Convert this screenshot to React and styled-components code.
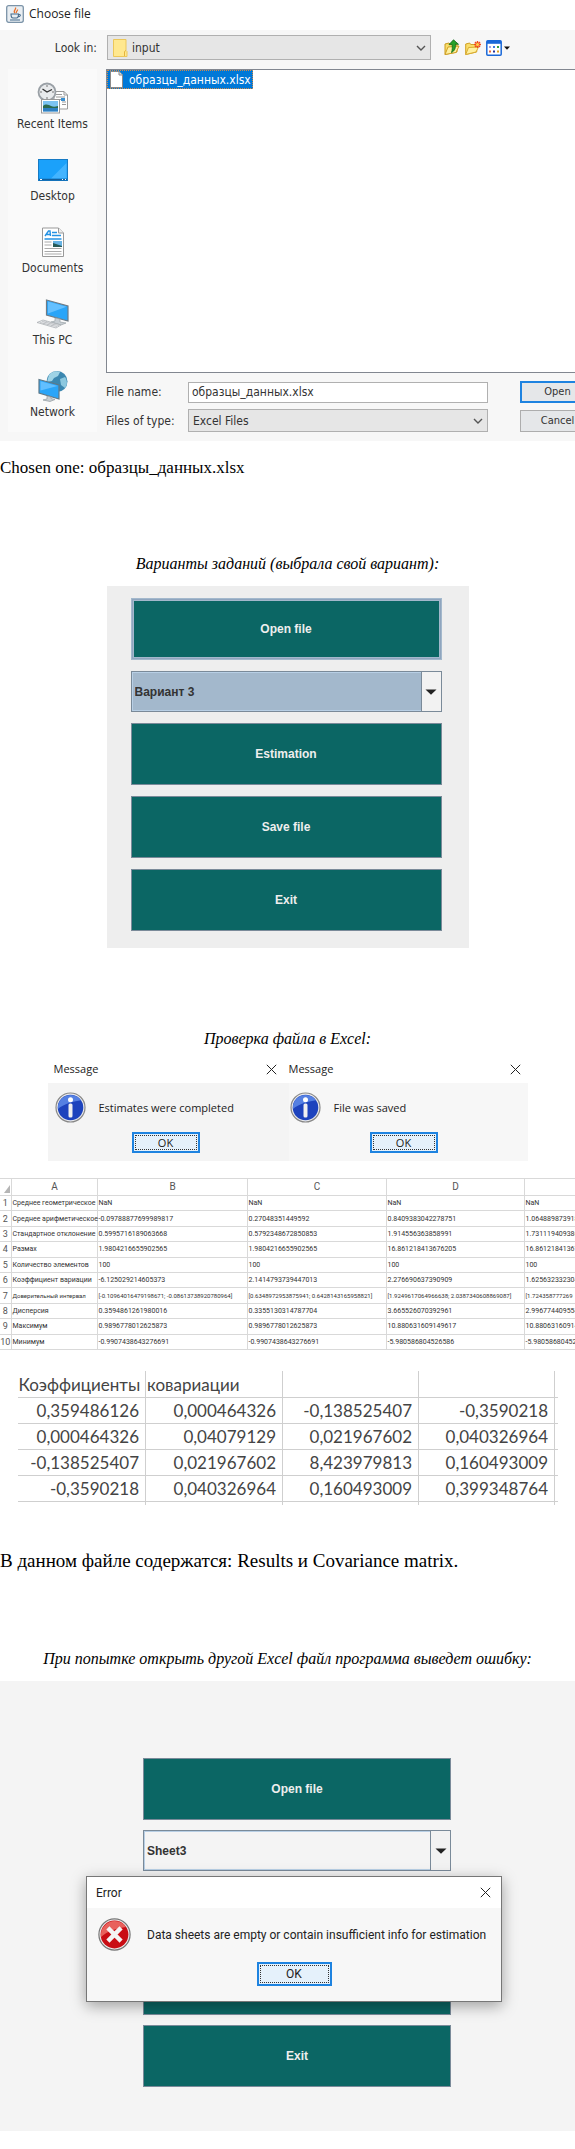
import React from "react";
import styled, { createGlobalStyle } from "styled-components";

const GlobalStyle = createGlobalStyle`
  * { box-sizing: border-box; }
  body { margin: 0; background: #fff; color: #000; overflow-x: hidden; }
  button, input, select { font: inherit; color: inherit; margin: 0; border-radius: 0; }
`;

const tahoma = `"DejaVu Sans Condensed", "Noto Sans", sans-serif`;
const segoe = `"Open Sans", "Noto Sans", sans-serif`;
const arial = `"Liberation Sans", Arial, sans-serif`;

const Page = styled.main`
  font-family: "Liberation Serif", "Times New Roman", serif;
  padding-bottom: 12px;
  overflow: hidden;
`;
const Paragraph = styled.p`
  margin: ${(p) => p.$space};
  font-size: ${(p) => (p.$large ? "19px" : "17px")};
  line-height: 24px;
`;
const Caption = styled.h2`
  margin: ${(p) => p.$space};
  font-size: 16px;
  font-weight: 400;
  font-style: italic;
  line-height: 24px;
  text-align: center;
`;

/* File chooser */
const Chooser = styled.section`
  background: #f7f7f7;
  font-family: ${tahoma};
  font-size: 12px;
  line-height: 16px;
  color: #333;
  overflow: hidden;
`;
const ChooserTitle = styled.header`
  display: flex;
  align-items: center;
  gap: 5px;
  height: 30px;
  padding: 0 0 2px 6px;
  background: #fff;
  color: #222;
  font-family: ${segoe};
`;
const LookRow = styled.div`
  display: flex;
  align-items: center;
  height: 39px;
  padding-bottom: 4px;
`;
const LookLabel = styled.label`
  width: 107px;
  padding-right: 10px;
  text-align: right;
`;
const Combo = styled.div`
  display: grid;
  grid-template-columns: ${(p) => (p.$icon ? "24px" : "4px")} 1fr 18px;
  align-items: center;
  width: ${(p) => p.$width};
  height: ${(p) => p.$height};
  border: 1px solid #b0b0b0;
  background: #e6e6e6;
  & > * { grid-row: 1; }
  & > svg { grid-column: 1; pointer-events: none; justify-self: center; }
  & > svg:last-child { grid-column: 3; }
`;
const ComboSelect = styled.select`
  appearance: none;
  grid-column: 1 / -1;
  width: 100%;
  height: 100%;
  padding: 0 18px 0 ${(p) => (p.$icon ? "24px" : "4px")};
  border: 0;
  background: transparent;
`;
const Tools = styled.div`
  display: flex;
  align-items: center;
  gap: 5px;
  margin-left: 13px;
`;
const ToolButton = styled.button`
  display: flex;
  align-items: center;
  gap: 2px;
  padding: 0;
  border: 0;
  background: none;
`;
const ChooserBody = styled.div`
  display: grid;
  grid-template-columns: 89px 1fr;
  gap: 9px;
  padding: 0 0 9px 8px;
`;
const Places = styled.nav`
  display: flex;
  flex-direction: column;
  background: #fafafa;
  padding-top: 13px;
  gap: 12px;
`;
const Place = styled.a`
  display: flex;
  flex-direction: column;
  align-items: center;
  gap: 2px;
  height: 60px;
  color: #333;
  text-decoration: none;
  svg { flex: none; }
`;
const FileArea = styled.div`
  min-width: 0;
`;
const FileList = styled.div`
  height: 304px;
  border: 1px solid #828790;
  border-right: 0;
  background: #fff;
`;
const FileItem = styled.button`
  display: flex;
  align-items: center;
  gap: 6px;
  height: 19px;
  padding: 0 1px 0 2px;
  border: 1px dotted #d08a4a;
  background: #0078d7;
  color: #fff;
`;
const FileForm = styled.form`
  display: grid;
  grid-template-columns: 82px 300px 75px;
  row-gap: 6px;
  padding-top: 8px;
  align-items: center;
  button { margin-left: 32px; }
`;
const FileInput = styled.input`
  width: 100%;
  height: 21px;
  padding: 0 3px;
  border: 1px solid #b0b0b0;
  background: #fff;
`;
const ChooserButton = styled.button`
  width: 75px;
  height: 22px;
  padding: 0;
  border: ${(p) => (p.$primary ? "2px solid #1e83e0" : "1px solid #adadad")};
  background: #e5e7e9;
  font-size: 11px;
`;

/* Task panels */
const TaskPanel = styled.section`
  display: flex;
  justify-content: center;
  margin: 10px auto 0;
  background: ${(p) => (p.$wide ? "#f4f4f4" : "#eeeeee")};
  width: ${(p) => (p.$wide ? "auto" : "362px")};
  padding: ${(p) => (p.$wide ? "77px 0 44px 19px" : "12px 3px 17px 0")};
`;
const Stack = styled.div`
  position: relative;
  display: flex;
  flex-direction: column;
  gap: ${(p) => (p.$wide ? "10px" : "11px")};
  width: ${(p) => (p.$wide ? "308px" : "311px")};
  font: bold 12px/16px ${arial};
  color: #333;
`;
const TaskButton = styled.button`
  height: 62px;
  padding: 0;
  border: ${(p) => (p.$focused ? "3px double #a3b8cc" : "1px solid #7a8a99")};
  outline: ${(p) => (p.$focused ? "1px solid #8fa5be" : "0")};
  outline-offset: -2px;
  background: #0b6664;
  color: #eee;
`;
const TaskCombo = styled.div`
  display: grid;
  grid-template-columns: 1fr 20px;
  align-items: stretch;
  height: 41px;
  border: 1px solid #7a8a99;
`;
const TaskSelect = styled.select`
  appearance: none;
  grid-area: 1 / 1 / 2 / 3;
  padding: 0 22px 0 2px;
  border: 1px solid #b8cfe5;
  background: ${(p) => (p.$selected ? "#a3b8cc" : "#f4f4f4")};
`;
const TaskArrow = styled.span`
  grid-area: 1 / 2 / 2 / 3;
  display: flex;
  align-items: center;
  justify-content: center;
  border-left: 1px solid #7a8a99;
  background: #f2f2f2;
  pointer-events: none;
`;

/* Message boxes */
const Messages = styled.div`
  display: flex;
  width: 480px;
  margin: 6px auto 0;
`;
const MessageBox = styled.section`
  flex: ${(p) => p.$basis};
  font-family: ${segoe};
  font-size: 11px;
  line-height: 16px;
  color: #222;
`;
const ErrorBox = styled(MessageBox)`
  position: absolute;
  left: -57px;
  top: 118px;
  width: 416px;
  font-family: Roboto, sans-serif;
  font-size: 12px;
  font-weight: 400;
  border: 1px solid #777;
  box-shadow: 0 4px 14px rgba(0, 0, 0, 0.35);
`;
const MessageTitle = styled.header`
  display: flex;
  align-items: center;
  justify-content: space-between;
  height: ${(p) => (p.$tall ? "31px" : "26px")};
  padding: ${(p) => (p.$tall ? "0 10px 0 9px" : p.$first ? "0 12px 2px 6px" : "0 7px 2px 0")};
  background: #fff;
`;
const CloseButton = styled.button`
  display: flex;
  padding: 0;
  border: 0;
  background: none;
`;
const MessageBody = styled.div`
  display: flex;
  flex-direction: column;
  align-items: ${(p) => (p.$tall ? "center" : "flex-start")};
  gap: ${(p) => (p.$tall ? "11px" : "9px")};
  height: ${(p) => (p.$tall ? "93px" : "78px")};
  padding-top: ${(p) => (p.$tall ? "10px" : "9px")};
  background: ${(p) => (p.$shade ? "#f4f4f4" : "#f7f7f7")};
`;
const MessageText = styled.div`
  display: flex;
  align-items: center;
  align-self: stretch;
  gap: ${(p) => (p.$tall ? "16px" : "13px")};
  padding-left: ${(p) => (p.$tall ? "11px" : p.$first ? "7px" : "1px")};
  white-space: nowrap;
  svg { flex: none; }
`;
const OkButton = styled.button`
  width: ${(p) => (p.$tall ? "75px" : "68px")};
  height: ${(p) => (p.$tall ? "24px" : "21px")};
  margin-left: ${(p) => (p.$tall ? "0" : p.$first ? "84px" : "81px")};
  padding: 0;
  border: 2px solid #1e83e0;
  outline: 1px dotted #333;
  outline-offset: -4px;
  background: #e5f1fb;
  line-height: 14px;
`;

/* Spreadsheets */
const SheetClip = styled.div`
  margin-top: 17px;
  overflow: hidden;
`;
const Sheet = styled.table`
  table-layout: fixed;
  border-collapse: collapse;
  width: 664px;
  height: 172px;
  font-family: Roboto, sans-serif;
  font-size: 7px;
  line-height: 12px;
  color: #333;
  td, th {
    padding: 0 0 0 1px;
    border: 1px solid #d9d9d9;
    font-weight: 400;
    white-space: nowrap;
    text-align: left;
  }
  tr > :first-child { border-left: 0; padding: 0; text-align: center; }
  thead th { height: 17px; text-align: center; font-size: 10px; color: #555; }
  tbody th { font-size: 9px; color: #555; }
  thead svg { display: block; margin: 4px 0 0 4px; }
`;
const ResultRow = styled.tr`
  td { font-size: ${(p) => (p.$dense ? "6px" : "7px")}; }
`;
const Matrix = styled.table`
  table-layout: fixed;
  border-collapse: collapse;
  width: 540px;
  margin: 21px auto 0;
  font-family: Lato, "Open Sans", sans-serif;
  font-size: 17px;
  line-height: 22px;
  color: #444;
  th, td {
    height: 26px;
    padding: 2px 6px 0 1px;
    border: 1px solid #cfcfcf;
    border-left: 0;
    font-weight: 400;
    text-align: right;
    white-space: nowrap;
  }
  th { text-align: left; border-top: 0; padding-right: 0; }
  tr > :last-child { border-right: 0; padding: 0; }
  tfoot td { height: 4px; padding: 0; border-bottom: 0; }
`;

const CloseIcon = () => (
  <svg width="11" height="11" viewBox="0 0 11 11" aria-hidden="true">
    <path d="M.8.8l9.4 9.4M10.2.8L.8 10.2" stroke="#222" strokeWidth="1" fill="none" />
  </svg>
);
const Chevron = () => (
  <svg width="10" height="6" viewBox="0 0 10 6" aria-hidden="true">
    <path d="M1 1l4 4 4-4" stroke="#555" strokeWidth="1.4" fill="none" />
  </svg>
);
const Caret = () => (
  <svg width="12" height="6" viewBox="0 0 12 6" aria-hidden="true">
    <path d="M.5.5h11L6 5.8z" fill="#222" />
  </svg>
);
const JavaIcon = () => (
  <svg width="18" height="18" viewBox="0 0 18 18" aria-hidden="true">
    <rect x=".7" y=".7" width="16.6" height="16.6" rx="2" fill="#e9eef2" stroke="#7b93a8" strokeWidth="1.3" />
    <path d="M9 8C6.5 6 10.500 5 9.500 2.500M10.500 8c-1-1.500 1.500-2 1-3.500" stroke="#e8702a" strokeWidth="1.3" fill="none" />
    <path d="M5 9h7.500c0 2-.5 4-2 4H7c-1.500 0-2-2-2-4zM12.500 9.500c3-.5 2 2.500-.8 2.500M4 15h10" stroke="#456b8c" strokeWidth="1.100" fill="none" />
  </svg>
);
const FolderIcon = () => (
  <svg width="15" height="18" viewBox="0 0 15 18" aria-hidden="true">
    <path d="M.5.500h12.500v11l1 1v5H.5z" fill="#ffe88f" stroke="#ecc75a" />
    <path d="M11.500 17v-4.500L13 11.500" stroke="#e5b53c" fill="none" />
  </svg>
);
const UpFolderIcon = () => (
  <svg width="16" height="17" viewBox="0 0 16 17" aria-hidden="true">
    <path d="M1 15.500V5l4-1 1 1h7v8z" fill="#f9dd6b" stroke="#c99a1e" />
    <path d="M1 15.500L4 8l11-1-3 6.500z" fill="#fff0a0" stroke="#d0a024" />
    <path d="M9.500.800l5 4.500-3-.2c0 4-.5 6.500-4 8.500 1-3 .8-5 .7-8H5z" fill="#27a12a" stroke="#10691a" strokeWidth=".8" />
  </svg>
);
const NewFolderIcon = () => (
  <svg width="16" height="16" viewBox="0 0 16 16" aria-hidden="true">
    <path d="M.7 14.500V4l4-1 1 1.500h6V12z" fill="#f9dd6b" stroke="#d0a024" />
    <path d="M.7 14.500L3.500 7.500l10-.5-2.500 5z" fill="#fff0a0" stroke="#d9ac30" />
    <path d="M12.500 1v7M9 4.500h7M10 2l5 5M15 2l-5 5" stroke="#f04a1c" strokeWidth="1.400" />
    <circle cx="12.500" cy="4.500" r="1.500" fill="#ffd24a" />
  </svg>
);
const ViewIcon = () => (
  <svg width="16" height="16" viewBox="0 0 16 16" aria-hidden="true">
    <rect x=".8" y=".8" width="14.400" height="14.400" rx="1" fill="#fff" stroke="#1a68d8" strokeWidth="1.500" />
    <path d="M1 2.300h14" stroke="#1a68d8" strokeWidth="3" />
    <path d="M3 6h2v2H3z" fill="#a9a0dc" /><path d="M7 6h2v2H7z" fill="#3c78e0" /><path d="M11 6h2v2h-2z" fill="#35a040" />
    <path d="M3 10.500h2v2H3z" fill="#f06a3a" /><path d="M7 10.500h2v2H7z" fill="#26329c" /><path d="M11 10.500h2v2h-2z" fill="#e0a020" />
  </svg>
);
const SmallCaret = () => (
  <svg width="6" height="4" viewBox="0 0 6 4" aria-hidden="true"><path d="M0 .5h6L3 3.800z" fill="#111" /></svg>
);
const SheetIcon = () => (
  <svg width="13" height="17" viewBox="0 0 13 17" aria-hidden="true">
    <path d="M.5.500h8.500l3.500 3.500v12.500H.5z" fill="#fff" stroke="#8a8a8a" />
    <path d="M9 .500v3.500h3.500" fill="#ddd" stroke="#8a8a8a" />
  </svg>
);
const RecentIcon = () => (
  <svg width="32" height="32" viewBox="0 0 32 32" aria-hidden="true">
    <path d="M17 9.500h10l3.500 3.500v14H17z" fill="#fff" stroke="#999" />
    <path d="M27 9.500V13h3.500M19 12.500h6M19 15h9M19 17.500h9M25 20h4M25 22.500h4" stroke="#999" fill="none" />
    <path d="M24 16h4v3h-4z" fill="#3a8fd0" />
    <circle cx="10" cy="10" r="8.500" fill="#e8eaec" stroke="#9aa0a6" strokeWidth="1.800" />
    <path d="M10 3v2M10 15v2M3 10h2M15 10h2" stroke="#777" />
    <path d="M5.500 7L10 10l5-2.500" stroke="#333" strokeWidth="1.300" fill="none" />
    <rect x="4.500" y="17.500" width="18" height="13.500" fill="#fff" stroke="#999" />
    <path d="M6 19h15v10.500H6z" fill="#7cc3f2" />
    <path d="M6 24c3-3 6-1 8 0s4 1 7 0v2H6z" fill="#2c6a4e" /><path d="M6 26h15v3.500H6z" fill="#2f80c2" />
  </svg>
);
const DesktopIcon = () => (
  <svg width="32" height="32" viewBox="0 0 32 32" aria-hidden="true">
    <rect x="1.500" y="5.500" width="29" height="21" fill="#1ba1fa" stroke="#167ac4" />
    <path d="M14 24.500L29.500 9v15.500z" fill="#43b4ff" />
    <path d="M2 25.500h28" stroke="#135f9c" strokeWidth="1.500" />
    <path d="M3 25.500h2M25 25.500h1M28 25.500h1" stroke="#fff" />
  </svg>
);
const DocumentsIcon = () => (
  <svg width="32" height="32" viewBox="0 0 32 32" aria-hidden="true">
    <path d="M5.500 2h16l5 5v23.500h-21z" fill="#fff" stroke="#999" />
    <path d="M21.500 2v5h5" fill="#eee" stroke="#999" />
    <path d="M8 10l3.500-5h1.500l.5 5M9.500 8.500h4" stroke="#2492e4" strokeWidth="1.400" fill="none" />
    <path d="M15 6.500h5M15 9.500h9M7.500 13h17" stroke="#2492e4" strokeWidth="1.300" />
    <path d="M7.500 16h7M7.500 19h7M7.500 22.500h17M7.500 25.500h17M7.500 28h17" stroke="#aaa" />
    <path d="M16 15h9v6h-9z" fill="#67b3e4" /><path d="M16 17l9 3v1h-9z" fill="#265a58" />
  </svg>
);
const PcIcon = () => (
  <svg width="32" height="32" viewBox="0 0 32 32" aria-hidden="true">
    <path d="M9.500 2l21.500 6v15L9.500 17z" fill="#2aa5f8" stroke="#6f7b85" strokeWidth="1.200" />
    <path d="M11 3.500l18.500 5.200L11 15.500z" fill="#64c0ff" />
    <path d="M18 20v3l-4 1 10 3 5-2-6-1v-3z" fill="#c8ced3" stroke="#98a0a6" strokeWidth=".7" />
    <path d="M0 24.500L6 22l18 5-5 3z" fill="#e8eaec" stroke="#a5a9ad" strokeWidth=".7" />
    <path d="M3 24.500l17 4M5 23.300l17 4.200M6 26.200l4-3M10 27.200l4-3M14 28l4-2.500" stroke="#b4b8bc" strokeWidth=".7" />
  </svg>
);
const NetworkIcon = () => (
  <svg width="32" height="32" viewBox="0 0 32 32" aria-hidden="true">
    <circle cx="20" cy="11.500" r="10.500" fill="#3b87b0" />
    <path d="M12 5c3-4 8-4.500 11-3l-2 4-4 2-2 3-5 1z" fill="#9ed3e6" /><path d="M23 9l5-2c3 4 2 9 0 11l-4-3z" fill="#8cc8df" />
    <path d="M2 9.500l20 5.500v14L2 23z" fill="#2aa5f8" stroke="#5f7887" strokeWidth="1.200" />
    <path d="M3.500 11.200l17 4.800-17 4.500z" fill="#62bfff" />
    <path d="M10 26v3l-4 1 7 1.500 5-2-4-1V27z" fill="#c9cfd3" stroke="#8f999f" strokeWidth=".7" />
  </svg>
);
const InfoIcon = () => (
  <svg width="31" height="31" viewBox="0 0 31 31" aria-hidden="true">
    <circle cx="15.500" cy="15.500" r="14.500" fill="#eee" stroke="#888" strokeWidth="1.200" />
    <circle cx="15.500" cy="15.500" r="12.800" fill="#1d43bd" />
    <path d="M2.900 17A12.800 12.800 0 0 1 26 8.200C20 9 8 12 2.900 17z" fill="#5580e2" />
    <circle cx="15.500" cy="7.800" r="2.500" fill="#fff" />
    <rect x="13.500" y="11.500" width="4" height="14" rx="1.500" fill="#f0f0f0" />
  </svg>
);
const ErrorIcon = () => (
  <svg width="33" height="33" viewBox="0 0 33 33" aria-hidden="true">
    <circle cx="16.500" cy="16.500" r="15.600" fill="#ededed" stroke="#777" strokeWidth="1.200" />
    <circle cx="16.500" cy="16.500" r="13.900" fill="#c90d14" />
    <path d="M3 19A13.800 13.800 0 0 1 28 9C20 10 9 13 3 19z" fill="#e8615c" />
    <path d="M11.500 11.500l10 10M21.500 11.500l-10 10" stroke="#f4f4f4" strokeWidth="4.500" strokeLinecap="square" />
  </svg>
);

const places = [
  ["Recent Items", RecentIcon],
  ["Desktop", DesktopIcon],
  ["Documents", DocumentsIcon],
  ["This PC", PcIcon],
  ["Network", NetworkIcon],
];
const results = [
  ["Среднее геометрическое", "NaN", "NaN", "NaN", "NaN"],
  ["Среднее арифметическое", "-0.09788877699989817", "0.27048351449592", "0.8409383042278751", "1.064889873918"],
  ["Стандартное отклонение", "0.5995716189063668", "0.5792348672850853", "1.914556363858991", "1.731119409386"],
  ["Размах", "1.9804216655902565", "1.9804216655902565", "16.861218413676205", "16.86121841367"],
  ["Количество элементов", "100", "100", "100", "100"],
  ["Коэффициент вариации", "-6.125029214605373", "2.1414793739447013", "2.276690637390909", "1.625632332304"],
  ["Доверительный интервал", "[-0.10964016479198671; -0.08613738920780964]", "[0.6348972953875941; 0.6428143165958821]", "[1.9249617064966638; 2.0387340608869087]", "[1.724358777269"],
  ["Дисперсия", "0.3594861261980016", "0.3355130314787704", "3.665526070392961", "2.996774409554"],
  ["Максимум", "0.9896778012625873", "0.9896778012625873", "10.880631609149617", "10.88063160914"],
  ["Минимум", "-0.9907438643276691", "-0.9907438643276691", "-5.980586804526586", "-5.98058680452"],
];
const covariance = [
  ["0,359486126", "0,000464326", "-0,138525407", "-0,3590218"],
  ["0,000464326", "0,04079129", "0,021967602", "0,040326964"],
  ["-0,138525407", "0,021967602", "8,423979813", "0,160493009"],
  ["-0,3590218", "0,040326964", "0,160493009", "0,399348764"],
];

function FileChooser() {
  return (
    <Chooser>
      <ChooserTitle><JavaIcon />Choose file</ChooserTitle>
      <LookRow>
        <LookLabel htmlFor="look-in">Look in:</LookLabel>
        <Combo $icon $width="324px" $height="25px">
          <ComboSelect id="look-in" $icon><option>input</option></ComboSelect>
          <FolderIcon />
          <Chevron />
        </Combo>
        <Tools>
          <ToolButton aria-label="Up one level"><UpFolderIcon /></ToolButton>
          <ToolButton aria-label="New folder"><NewFolderIcon /></ToolButton>
          <ToolButton aria-label="View"><ViewIcon /><SmallCaret /></ToolButton>
        </Tools>
      </LookRow>
      <ChooserBody>
        <Places>
          {places.map(([name, Icon]) => (
            <Place href="#" key={name}><Icon />{name}</Place>
          ))}
        </Places>
        <FileArea>
          <FileList><FileItem><SheetIcon />образцы_данных.xlsx</FileItem></FileList>
          <FileForm onSubmit={(e) => e.preventDefault()}>
            <label htmlFor="file-name">File name:</label>
            <FileInput id="file-name" defaultValue="образцы_данных.xlsx" />
            <ChooserButton $primary>Open</ChooserButton>
            <label htmlFor="file-type">Files of type:</label>
            <Combo $width="300px" $height="23px">
              <ComboSelect id="file-type"><option>Excel Files</option></ComboSelect>
              <Chevron />
            </Combo>
            <ChooserButton type="button">Cancel</ChooserButton>
          </FileForm>
        </FileArea>
      </ChooserBody>
    </Chooser>
  );
}

function TaskMenu({ wide, option, children }) {
  return (
    <TaskPanel $wide={wide}>
      <Stack $wide={wide}>
        <TaskButton $focused={!wide}>Open file</TaskButton>
        <TaskCombo>
          <TaskSelect aria-label="Variant" $selected={!wide}><option>{option}</option></TaskSelect>
          <TaskArrow><Caret /></TaskArrow>
        </TaskCombo>
        <TaskButton>Estimation</TaskButton>
        <TaskButton>Save file</TaskButton>
        <TaskButton>Exit</TaskButton>
        {children}
      </Stack>
    </TaskPanel>
  );
}

function MessageContent({ title, text, icon, tall, first }) {
  return (
    <>
      <MessageTitle $tall={tall} $first={first}>
        {title}
        <CloseButton aria-label="Close"><CloseIcon /></CloseButton>
      </MessageTitle>
      <MessageBody $tall={tall} $shade={first}>
        <MessageText $tall={tall} $first={first}>{icon}{text}</MessageText>
        <OkButton $tall={tall} $first={first}>OK</OkButton>
      </MessageBody>
    </>
  );
}

export default function App() {
  return (
    <Page>
      <GlobalStyle />
      <FileChooser />
      <Paragraph $space="15px 0 0">Chosen one: образцы_данных.xlsx</Paragraph>
      <Caption $space="72px 0 0">Варианты заданий (выбрала свой вариант):</Caption>
      <TaskMenu option="Вариант 3" />
      <Caption $space="79px 0 0">Проверка файла в Excel:</Caption>
      <Messages>
        <MessageBox $basis="0 0 241px">
          <MessageContent first title="Message" text="Estimates were completed" icon={<InfoIcon />} />
        </MessageBox>
        <MessageBox $basis="1">
          <MessageContent title="Message" text="File was saved" icon={<InfoIcon />} />
        </MessageBox>
      </Messages>
      <SheetClip>
        <Sheet>
          <colgroup>
            <col style={{ width: 11 }} /><col style={{ width: 86 }} /><col style={{ width: 150 }} />
            <col style={{ width: 139 }} /><col style={{ width: 138 }} /><col />
          </colgroup>
          <thead>
            <tr>
              <th><svg width="6" height="8" viewBox="0 0 6 8" aria-hidden="true"><path d="M6 0v8H0z" fill="#b5b5b5" /></svg></th>
              <th>A</th><th>B</th><th>C</th><th>D</th><th />
            </tr>
          </thead>
          <tbody>
            {results.map((row, i) => (
              <ResultRow key={row[0]} $dense={row[1].startsWith("[")}>
                <th>{i + 1}</th>
                {row.map((cell, j) => <td key={j}>{cell}</td>)}
              </ResultRow>
            ))}
          </tbody>
        </Sheet>
      </SheetClip>
      <Matrix>
        <colgroup>
          <col style={{ width: 128 }} /><col style={{ width: 137 }} /><col style={{ width: 136 }} />
          <col style={{ width: 136 }} /><col />
        </colgroup>
        <thead><tr><th>Коэффициенты</th><th>ковариации</th><th /><th /><th /></tr></thead>
        <tbody>
          {covariance.map((row, i) => (
            <tr key={i}>{row.map((cell, j) => <td key={j}>{cell}</td>)}<td /></tr>
          ))}
        </tbody>
        <tfoot><tr><td /><td /><td /><td /><td /></tr></tfoot>
      </Matrix>
      <Paragraph $large $space="44px 0 0">В данном файле содержатся: Results и Covariance matrix.</Paragraph>
      <Caption $space="74px 0 0">При попытке открыть другой Excel файл программа выведет ошибку:</Caption>
      <TaskMenu wide option="Sheet3">
        <ErrorBox role="dialog" aria-label="Error">
          <MessageContent tall title="Error" text="Data sheets are empty or contain insufficient info for estimation" icon={<ErrorIcon />} />
        </ErrorBox>
      </TaskMenu>
    </Page>
  );
}
